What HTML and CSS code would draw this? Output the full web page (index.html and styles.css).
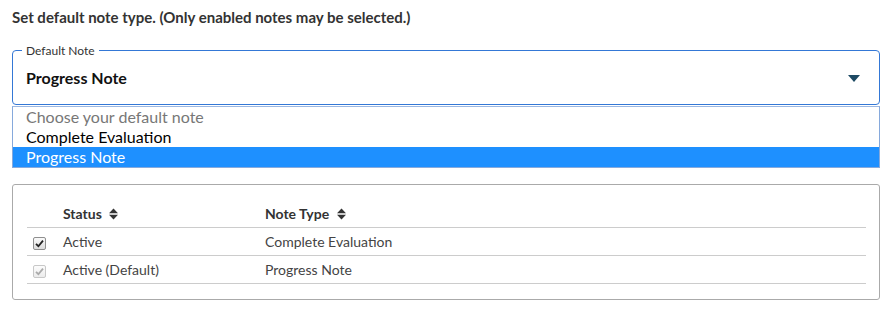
FILE: index.html
```html
<!DOCTYPE html>
<html lang="en">
<head>
    <meta charset="UTF-8">
    <meta name="viewport" content="width=device-width, initial-scale=1.0">
    <title>Default Note</title>
    <link rel="stylesheet" href="styles.css">
</head>
<body>
    <div class="page">
        <p class="intro">Set default note type. (Only enabled notes may be selected.)</p>

        <fieldset class="select-box">
            <legend>Default Note</legend>
            <div class="select-value">
                <span>Progress Note</span>
                <svg class="caret" width="12" height="7" viewBox="0 0 12 7"><polygon points="0,0 12,0 6,7" fill="#1d4a63"/></svg>
            </div>
        </fieldset>
        <ul class="options">
            <li class="placeholder">Choose your default note</li>
            <li>Complete Evaluation</li>
            <li class="selected">Progress Note</li>
        </ul>

        <div class="card">
            <table class="notes">
                <thead>
                    <tr>
                        <th class="check-col"></th>
                        <th class="status-col">Status <svg class="sort" width="9" height="12" viewBox="0 0 9 12"><polygon points="0,5.2 4.5,0.5 9,5.2" fill="#333"/><polygon points="0,6.8 4.5,11.5 9,6.8" fill="#333"/></svg></th>
                        <th>Note Type <svg class="sort" width="9" height="12" viewBox="0 0 9 12"><polygon points="0,5.2 4.5,0.5 9,5.2" fill="#333"/><polygon points="0,6.8 4.5,11.5 9,6.8" fill="#333"/></svg></th>
                    </tr>
                </thead>
                <tbody>
                    <tr>
                        <td><span class="checkbox"><svg width="9" height="9" viewBox="0 0 9 9"><path d="M1 4.8 L3.4 7.2 L8 1.6" stroke="#222" stroke-width="1.8" fill="none"/></svg></span></td>
                        <td>Active</td>
                        <td>Complete Evaluation</td>
                    </tr>
                    <tr>
                        <td><span class="checkbox disabled"><svg width="9" height="9" viewBox="0 0 9 9"><path d="M1 4.8 L3.4 7.2 L8 1.6" stroke="#aaa" stroke-width="1.8" fill="none"/></svg></span></td>
                        <td>Active (Default)</td>
                        <td>Progress Note</td>
                    </tr>
                </tbody>
            </table>
        </div>
    </div>
</body>
</html>
```

FILE: styles.css
```css
body { margin: 0; font-family: Lato, "Open Sans", sans-serif; color: #333; background: #fff; }
.page { padding: 8px 16px 0 12px; }
.intro { margin: 0; font-size: 15px; line-height: 18px; font-weight: 700; color: #333; }

.select-box { margin: 18px 0 0 0; padding: 11px 19px 16px 13px; border: 1px solid #3478d6; border-radius: 4px; }
.select-box legend { margin-left: -4px; padding: 0 4px; font-size: 12px; line-height: 13px; color: #333; }
.select-value { display: flex; justify-content: space-between; align-items: center; font-size: 16px; line-height: 20px; font-weight: 700; color: #111; }
.caret { display: block; }

.options { list-style: none; margin: 1px 0 0 0; padding: 0; border: 1px solid #86a9dc; border-top-color: #9bb7e2; }
.options li { padding-left: 13px; font-size: 16px; line-height: 20px; color: #000; }
.options .placeholder { color: #777; }
.options .selected { background-color: #1e90ff; color: #fff; }

.card { margin-top: 16px; padding: 14px 13px 15px 14px; border: 1px solid #aaa; border-radius: 3px; }
.notes { width: 100%; border-collapse: collapse; font-size: 14px; }
.notes th { text-align: left; font-weight: 700; color: #333; height: 28px; padding: 0; border-bottom: 1px solid #ccc; }
.notes td { height: 27px; padding: 0; color: #444; border-bottom: 1px solid #ccc; }
.notes .check-col { width: 36px; }
.notes .status-col { width: 202px; }
.sort { vertical-align: -1px; margin-left: 4px; }

.checkbox { display: inline-flex; align-items: center; justify-content: center; width: 11px; height: 11px; margin-left: 6px; vertical-align: -1px; border: 1px solid #8f8f8f; border-radius: 2px; background: linear-gradient(#fafafa, #dcdcdc); }
.checkbox.disabled { border-color: #c8c8c8; background: linear-gradient(#fcfcfc, #ececec); }
```
